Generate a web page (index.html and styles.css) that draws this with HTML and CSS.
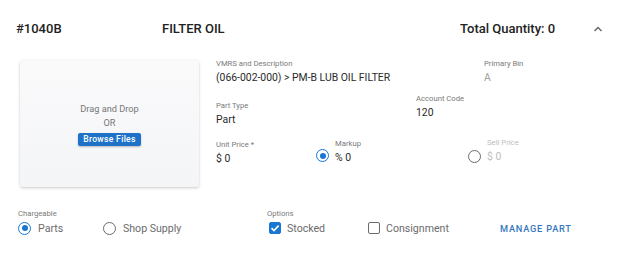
FILE: index.html
```html
<!DOCTYPE html>
<html>
<head>
<meta charset="utf-8">
<link rel="stylesheet" href="styles.css">
</head>
<body>
<div class="card">
  <div class="header">
    <div class="h-id">#1040B</div>
    <div class="h-name">FILTER OIL</div>
    <div class="h-qty">Total Quantity: 0</div>
    <div class="h-chev">
      <svg width="10" height="6" viewBox="0 0 10 6"><polyline points="1.5,5 5,1.5 8.5,5" fill="none" stroke="#666" stroke-width="1.4"/></svg>
    </div>
  </div>
  <div class="body">
    <div class="drop">
      <div class="drop-text">Drag and Drop</div>
      <div class="drop-or">OR</div>
      <button class="browse">Browse Files</button>
    </div>
    <div class="fields">
      <div class="row row1">
        <div class="field f-vmrs">
          <div class="label">VMRS and Description</div>
          <div class="value">(066-002-000) &gt; PM-B LUB OIL FILTER</div>
        </div>
        <div class="field">
          <div class="label">Primary Bin</div>
          <div class="value muted">A</div>
        </div>
      </div>
      <div class="row row2">
        <div class="field f-type">
          <div class="label">Part Type</div>
          <div class="value">Part</div>
        </div>
        <div class="field">
          <div class="label">Account Code</div>
          <div class="value">120</div>
        </div>
      </div>
      <div class="row row3">
        <div class="field f-price">
          <div class="label">Unit Price *</div>
          <div class="value">$ 0</div>
        </div>
        <div class="radio-field f-markup">
          <span class="radio checked"></span>
          <div class="field">
            <div class="label">Markup</div>
            <div class="value">% 0</div>
          </div>
        </div>
        <div class="radio-field f-sell">
          <span class="radio"></span>
          <div class="field">
            <div class="label disabled">Sell Price</div>
            <div class="value disabled">$ 0</div>
          </div>
        </div>
      </div>
    </div>
  </div>
  <div class="footer">
    <div class="group g-charge">
      <div class="label">Chargeable</div>
      <div class="controls">
        <label class="opt o-parts"><span class="radio checked"></span>Parts</label>
        <label class="opt"><span class="radio"></span>Shop Supply</label>
      </div>
    </div>
    <div class="group g-options">
      <div class="label">Options</div>
      <div class="controls">
        <label class="opt o-stocked"><span class="check checked"><svg width="12" height="12" viewBox="0 0 12 12"><polyline points="2.5,6.2 5,8.6 9.6,3.6" fill="none" stroke="#fff" stroke-width="1.6"/></svg></span>Stocked</label>
        <label class="opt"><span class="check"></span>Consignment</label>
      </div>
    </div>
    <div class="manage">MANAGE PART</div>
  </div>
</div>
</body>
</html>
```
FILE: styles.css
```css
* { box-sizing: border-box; }
html, body { margin: 0; padding: 0; background: #fff; }
body { font-family: Roboto, "Noto Sans", sans-serif; color: #222; }
.card {
  width: 624px;
  height: 263px;
  background: #fff;
  box-shadow: 0 1px 2px rgba(0,0,0,0.12);
}
.header {
  display: flex;
  align-items: center;
  height: 56px;
  padding-left: 16px;
  font-size: 13px;
  font-weight: 500;
  color: #222;
}
.h-id { width: 146px; }
.h-name { width: 298px; }
.h-qty { width: 133px; }
.h-chev { display: flex; align-items: center; padding-top: 1px; }
.body {
  display: flex;
  padding-left: 20px;
  padding-top: 4px;
}
.drop {
  width: 179px;
  height: 127px;
  border-radius: 3px;
  background: linear-gradient(#fafafb, #f4f5f7);
  box-shadow: 0 1px 3px rgba(0,0,0,0.22);
  display: flex;
  flex-direction: column;
  align-items: center;
  padding-top: 42px;
  color: #777;
  font-size: 9.2px;
}
.drop-text { line-height: 14px; }
.drop-or { line-height: 14px; }
.browse {
  margin-top: 3px;
  font-family: Roboto, sans-serif;
  font-size: 8.6px;
  font-weight: 500;
  letter-spacing: 0.3px;
  color: #fff;
  background: #1e73c8;
  border: none;
  border-radius: 2px;
  height: 13px;
  padding: 0 5px;
  line-height: 13px;
  box-shadow: 0 1px 2px rgba(0,0,0,0.25);
}
.fields { margin-left: 17px; margin-top: -2px; }
.row { display: flex; align-items: flex-start; }
.field { display: flex; flex-direction: column; }
.label { font-size: 7.7px; line-height: 12px; color: #7a7a7a; }
.value { font-size: 10.4px; line-height: 16px; color: #2a2a2a; }
.muted { color: #a0a0a0; }
.disabled { color: #bdbdbd; }
.f-vmrs { width: 268px; }
.row2 { margin-top: 7px; }
.f-type { width: 200px; margin-top: 7px; }
.row3 { margin-top: 10px; }
.f-price { width: 100px; margin-top: 1px; }
.radio-field { display: flex; align-items: center; }
.radio-field .field { margin-left: 6px; }
.f-markup { width: 152px; align-items: flex-start; }
.f-markup .radio { margin-top: 11px; }
.f-sell { align-items: flex-start; }
.f-sell .radio { margin-top: 12px; margin-left: 0; }
.f-sell .field { margin-left: 6px; margin-top: -1px; }
.radio {
  width: 13px; height: 13px;
  border-radius: 50%;
  border: 1.6px solid #6b6b6b;
  display: inline-flex;
  align-items: center; justify-content: center;
  flex: none;
}
.radio.checked { border-color: #1976d2; }
.radio.checked::after {
  content: "";
  width: 6px; height: 6px;
  border-radius: 50%;
  background: #1976d2;
}
.footer {
  display: flex;
  margin-top: 21px;
  padding-left: 18px;
}
.group .label { line-height: 12px; }
.controls { display: flex; align-items: center; height: 16px; }
.g-charge { width: 249px; }
.g-options { width: 232px; }
.opt {
  display: flex; align-items: center;
  font-size: 10.6px; color: #6b6b6b;
}
.o-parts { width: 85px; }
.opt .radio { margin-right: 7px; }
.o-stocked { width: 99px; margin-left: 2px; }
.check {
  width: 12px; height: 12px;
  border: 1.6px solid #6b6b6b;
  border-radius: 2px;
  margin-right: 6px;
  display: inline-flex; align-items: center; justify-content: center;
  flex: none;
}
.check.checked { background: #1976d2; border-color: #1976d2; }
.check svg { display: block; flex: none; }
.manage {
  align-self: flex-end;
  font-size: 9.2px;
  font-weight: 500;
  letter-spacing: 0.8px;
  color: #3576c0;
  line-height: 16px;
  margin-left: 1px;
  margin-bottom: -1px;
}
```
